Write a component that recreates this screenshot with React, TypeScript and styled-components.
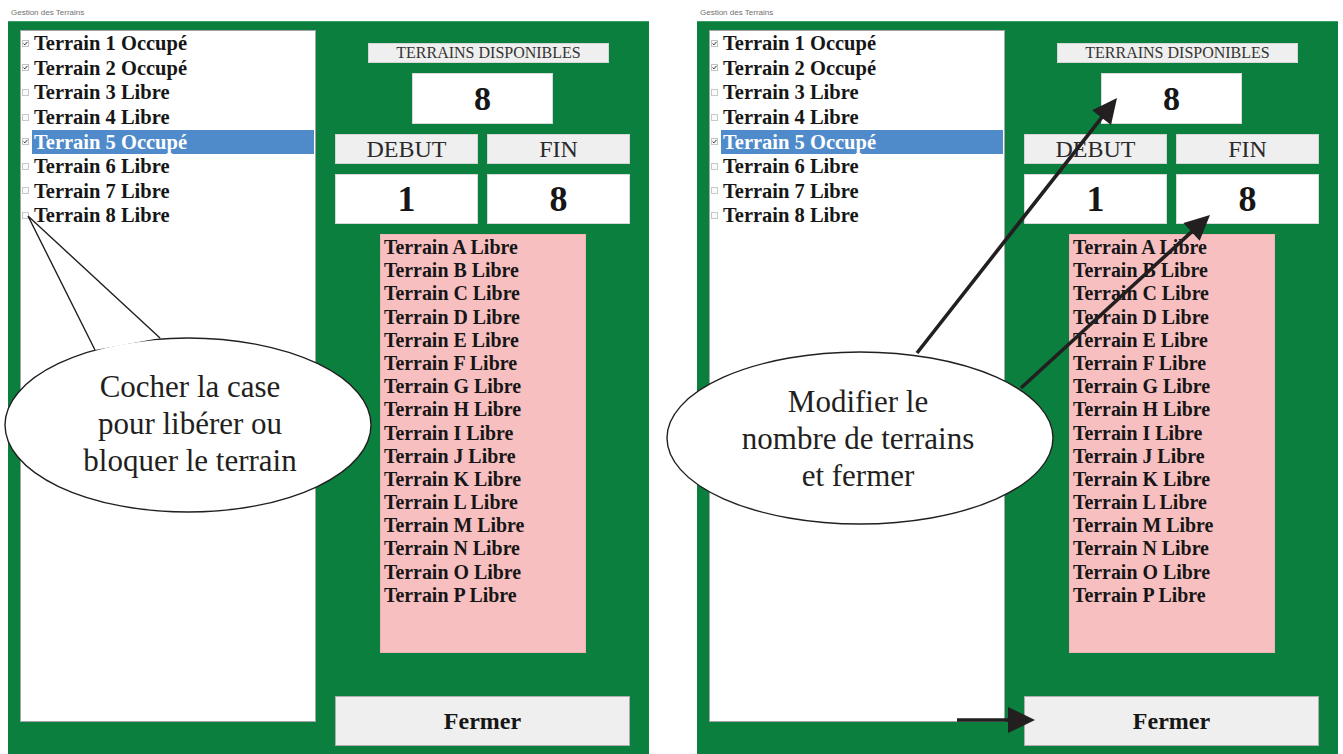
import React from "react";
import styled, { createGlobalStyle } from "styled-components";

const GlobalStyle = createGlobalStyle`
  html, body { margin: 0; padding: 0; background: #ffffff; }
  body { font-family: "Liberation Serif", "Times New Roman", serif; }
`;

const SERIF = `"Liberation Serif", "Times New Roman", serif`;
const GREEN = "#0b7f3e";
const INK = "#161616";

const Page = styled.div`
  position: relative;
  width: 1343px;
  height: 754px;
  overflow: hidden;
  display: flex;
  gap: 48px;
  padding-left: 8px;
  box-sizing: border-box;
  background: #fff;
`;

const Window = styled.div`
  width: 641px;
  height: 754px;
  display: flex;
  flex-direction: column;
  flex-shrink: 0;
`;

const TitleBar = styled.div`
  height: 22px;
  box-sizing: border-box;
  padding: 8px 0 0 3px;
  font: 8px/10px "Liberation Sans", Arial, sans-serif;
  color: #707070;
`;

const Client = styled.div`
  flex: 1;
  display: flex;
  gap: 19px;
  padding: 8px 19px 0 12px;
  background: ${GREEN};
  border-top: 1px solid #3aa066;
  margin-top: -1px;
`;

const ListBox = styled.div`
  width: 296px;
  height: 692px;
  box-sizing: border-box;
  background: #fff;
  border: 1px solid #a4a4a4;
  display: flex;
  flex-direction: column;
`;

const Row = styled.div`
  height: 24.6px;
  display: flex;
  align-items: center;
  font: bold 20.5px/24px ${SERIF};
  color: ${INK};
`;

const Check = styled.span<{ $on: boolean }>`
  width: 7px;
  height: 7px;
  margin: 0 3px 0 1px;
  box-sizing: border-box;
  border: 1px solid ${(p) => (p.$on ? "#c4c4c4" : "#c9c9c9")};
  background: #fafafa;
  display: flex;
  align-items: center;
  justify-content: center;
  flex-shrink: 0;
  overflow: visible;
`;

const RowLabel = styled.span<{ $selected: boolean }>`
  flex: 1;
  height: 24px;
  margin-right: 1px;
  padding-left: 2px;
  white-space: nowrap;
  background: ${(p) => (p.$selected ? "#4f8bcb" : "transparent")};
  color: ${(p) => (p.$selected ? "#ffffff" : INK)};
`;

const RightColumn = styled.div`
  width: 295px;
  display: flex;
  flex-direction: column;
  gap: 10px;
  padding-top: 13px;
`;

const HeaderLabel = styled.div`
  width: 241px;
  height: 20px;
  margin-left: 33px;
  box-sizing: border-box;
  background: #efefef;
  border: 1px solid #d6d6d6;
  text-align: center;
  font: 16px/18px ${SERIF};
  color: #333;
`;

const CountBox = styled.div`
  width: 141px;
  height: 51px;
  margin-left: 77px;
  box-sizing: border-box;
  background: #fff;
  border: 1px solid #d8d8d8;
  text-align: center;
  font: bold 34px/49px ${SERIF};
  color: ${INK};
`;

const FieldRow = styled.div`
  display: grid;
  grid-template-columns: 143px 143px;
  column-gap: 9px;
`;

const FieldLabel = styled.div`
  height: 30px;
  box-sizing: border-box;
  background: #efefef;
  border: 1px solid #d4d4d4;
  text-align: center;
  font: 24px/28px ${SERIF};
  color: #2a2a2a;
`;

const FieldValue = styled.div`
  height: 50px;
  box-sizing: border-box;
  background: #fff;
  border: 1px solid #d8d8d8;
  text-align: center;
  font: bold 36px/48px ${SERIF};
  color: ${INK};
`;

const FreeList = styled.div`
  width: 206px;
  height: 419px;
  margin-left: 45px;
  box-sizing: border-box;
  padding: 1px 0 0 3px;
  background: #f8bfc1;
  border: 1px solid #f0b2b4;
  display: flex;
  flex-direction: column;
`;

const FreeItem = styled.div`
  height: 23.2px;
  font: bold 19.9px/23px ${SERIF};
  color: ${INK};
  white-space: nowrap;
`;

const CloseButton = styled.button`
  margin-top: 33px;
  height: 50px;
  box-sizing: border-box;
  background: #efefef;
  border: 1px solid #aeaeae;
  font: bold 24px ${SERIF};
  color: ${INK};
  padding: 0;
`;

const Overlay = styled.svg`
  position: absolute;
  left: 0;
  top: 0;
  width: 1343px;
  height: 754px;
  pointer-events: none;
`;

const CalloutText = styled.div<{ $x: number; $y: number }>`
  position: absolute;
  left: ${(p) => p.$x}px;
  top: ${(p) => p.$y}px;
  width: 360px;
  text-align: center;
  font: 31px/37px ${SERIF};
  color: #231f20;
  white-space: nowrap;
  pointer-events: none;
`;

const sites = [
  { n: 1, on: true },
  { n: 2, on: true },
  { n: 3, on: false },
  { n: 4, on: false },
  { n: 5, on: true },
  { n: 6, on: false },
  { n: 7, on: false },
  { n: 8, on: false },
];

const letters = "ABCDEFGHIJKLMNOP".split("");

function TerrainWindow() {
  return (
    <Window>
      <TitleBar>Gestion des Terrains</TitleBar>
      <Client>
        <ListBox>
          {sites.map((s) => (
            <Row key={s.n}>
              <Check $on={s.on}>
                {s.on && (
                  <svg width="7" height="7" viewBox="0 0 7 7">
                    <path d="M0.8 3.6 L2.7 5.4 L6.2 1.2" fill="none" stroke="#222" strokeWidth="1.3" />
                  </svg>
                )}
              </Check>
              <RowLabel $selected={s.n === 5}>
                Terrain {s.n} {s.on ? "Occupé" : "Libre"}
              </RowLabel>
            </Row>
          ))}
        </ListBox>
        <RightColumn>
          <HeaderLabel>TERRAINS DISPONIBLES</HeaderLabel>
          <CountBox>8</CountBox>
          <FieldRow>
            <FieldLabel>DEBUT</FieldLabel>
            <FieldLabel>FIN</FieldLabel>
          </FieldRow>
          <FieldRow>
            <FieldValue>1</FieldValue>
            <FieldValue>8</FieldValue>
          </FieldRow>
          <FreeList>
            {letters.map((l) => (
              <FreeItem key={l}>Terrain {l} Libre</FreeItem>
            ))}
          </FreeList>
          <CloseButton>Fermer</CloseButton>
        </RightColumn>
      </Client>
    </Window>
  );
}

function Arrow({ x1, y1, x2, y2, len, half }: { x1: number; y1: number; x2: number; y2: number; len: number; half: number }) {
  const dx = x2 - x1;
  const dy = y2 - y1;
  const L = Math.hypot(dx, dy);
  const ux = dx / L;
  const uy = dy / L;
  const bx = x2 - ux * len;
  const by = y2 - uy * len;
  const px = -uy;
  const py = ux;
  const pts = `${x2},${y2} ${bx + px * half},${by + py * half} ${bx - px * half},${by - py * half}`;
  return (
    <g>
      <line x1={x1} y1={y1} x2={bx + ux * 3} y2={by + uy * 3} stroke="#231f20" strokeWidth="3.6" />
      <polygon points={pts} fill="#231f20" />
    </g>
  );
}

export default function App() {
  return (
    <>
      <GlobalStyle />
      <Page>
        <TerrainWindow />
        <TerrainWindow />
        <Overlay viewBox="0 0 1343 754">
          <ellipse cx="188" cy="425" rx="183" ry="87" fill="#fff" stroke="#231f20" strokeWidth="1.4" />
          <polygon points="95,350 28,216 160,338" fill="#fff" />
          <polyline points="95,350 28,216 160,338" fill="none" stroke="#231f20" strokeWidth="1.4" />
          <ellipse cx="860" cy="438" rx="193" ry="86" fill="#fff" stroke="#231f20" strokeWidth="1.4" />
          <Arrow x1={917} y1={353} x2={1117} y2={98} len={25} half={12} />
          <Arrow x1={1021} y1={388} x2={1210} y2={215} len={25} half={12} />
          <Arrow x1={957} y1={720} x2={1035} y2={720} len={27} half={13} />
        </Overlay>
        <CalloutText $x={10} $y={368}>
          Cocher la case
          <br />
          pour libérer ou
          <br />
          bloquer le terrain
        </CalloutText>
        <CalloutText $x={678} $y={383}>
          Modifier le
          <br />
          nombre de terrains
          <br />
          et fermer
        </CalloutText>
      </Page>
    </>
  );
}
